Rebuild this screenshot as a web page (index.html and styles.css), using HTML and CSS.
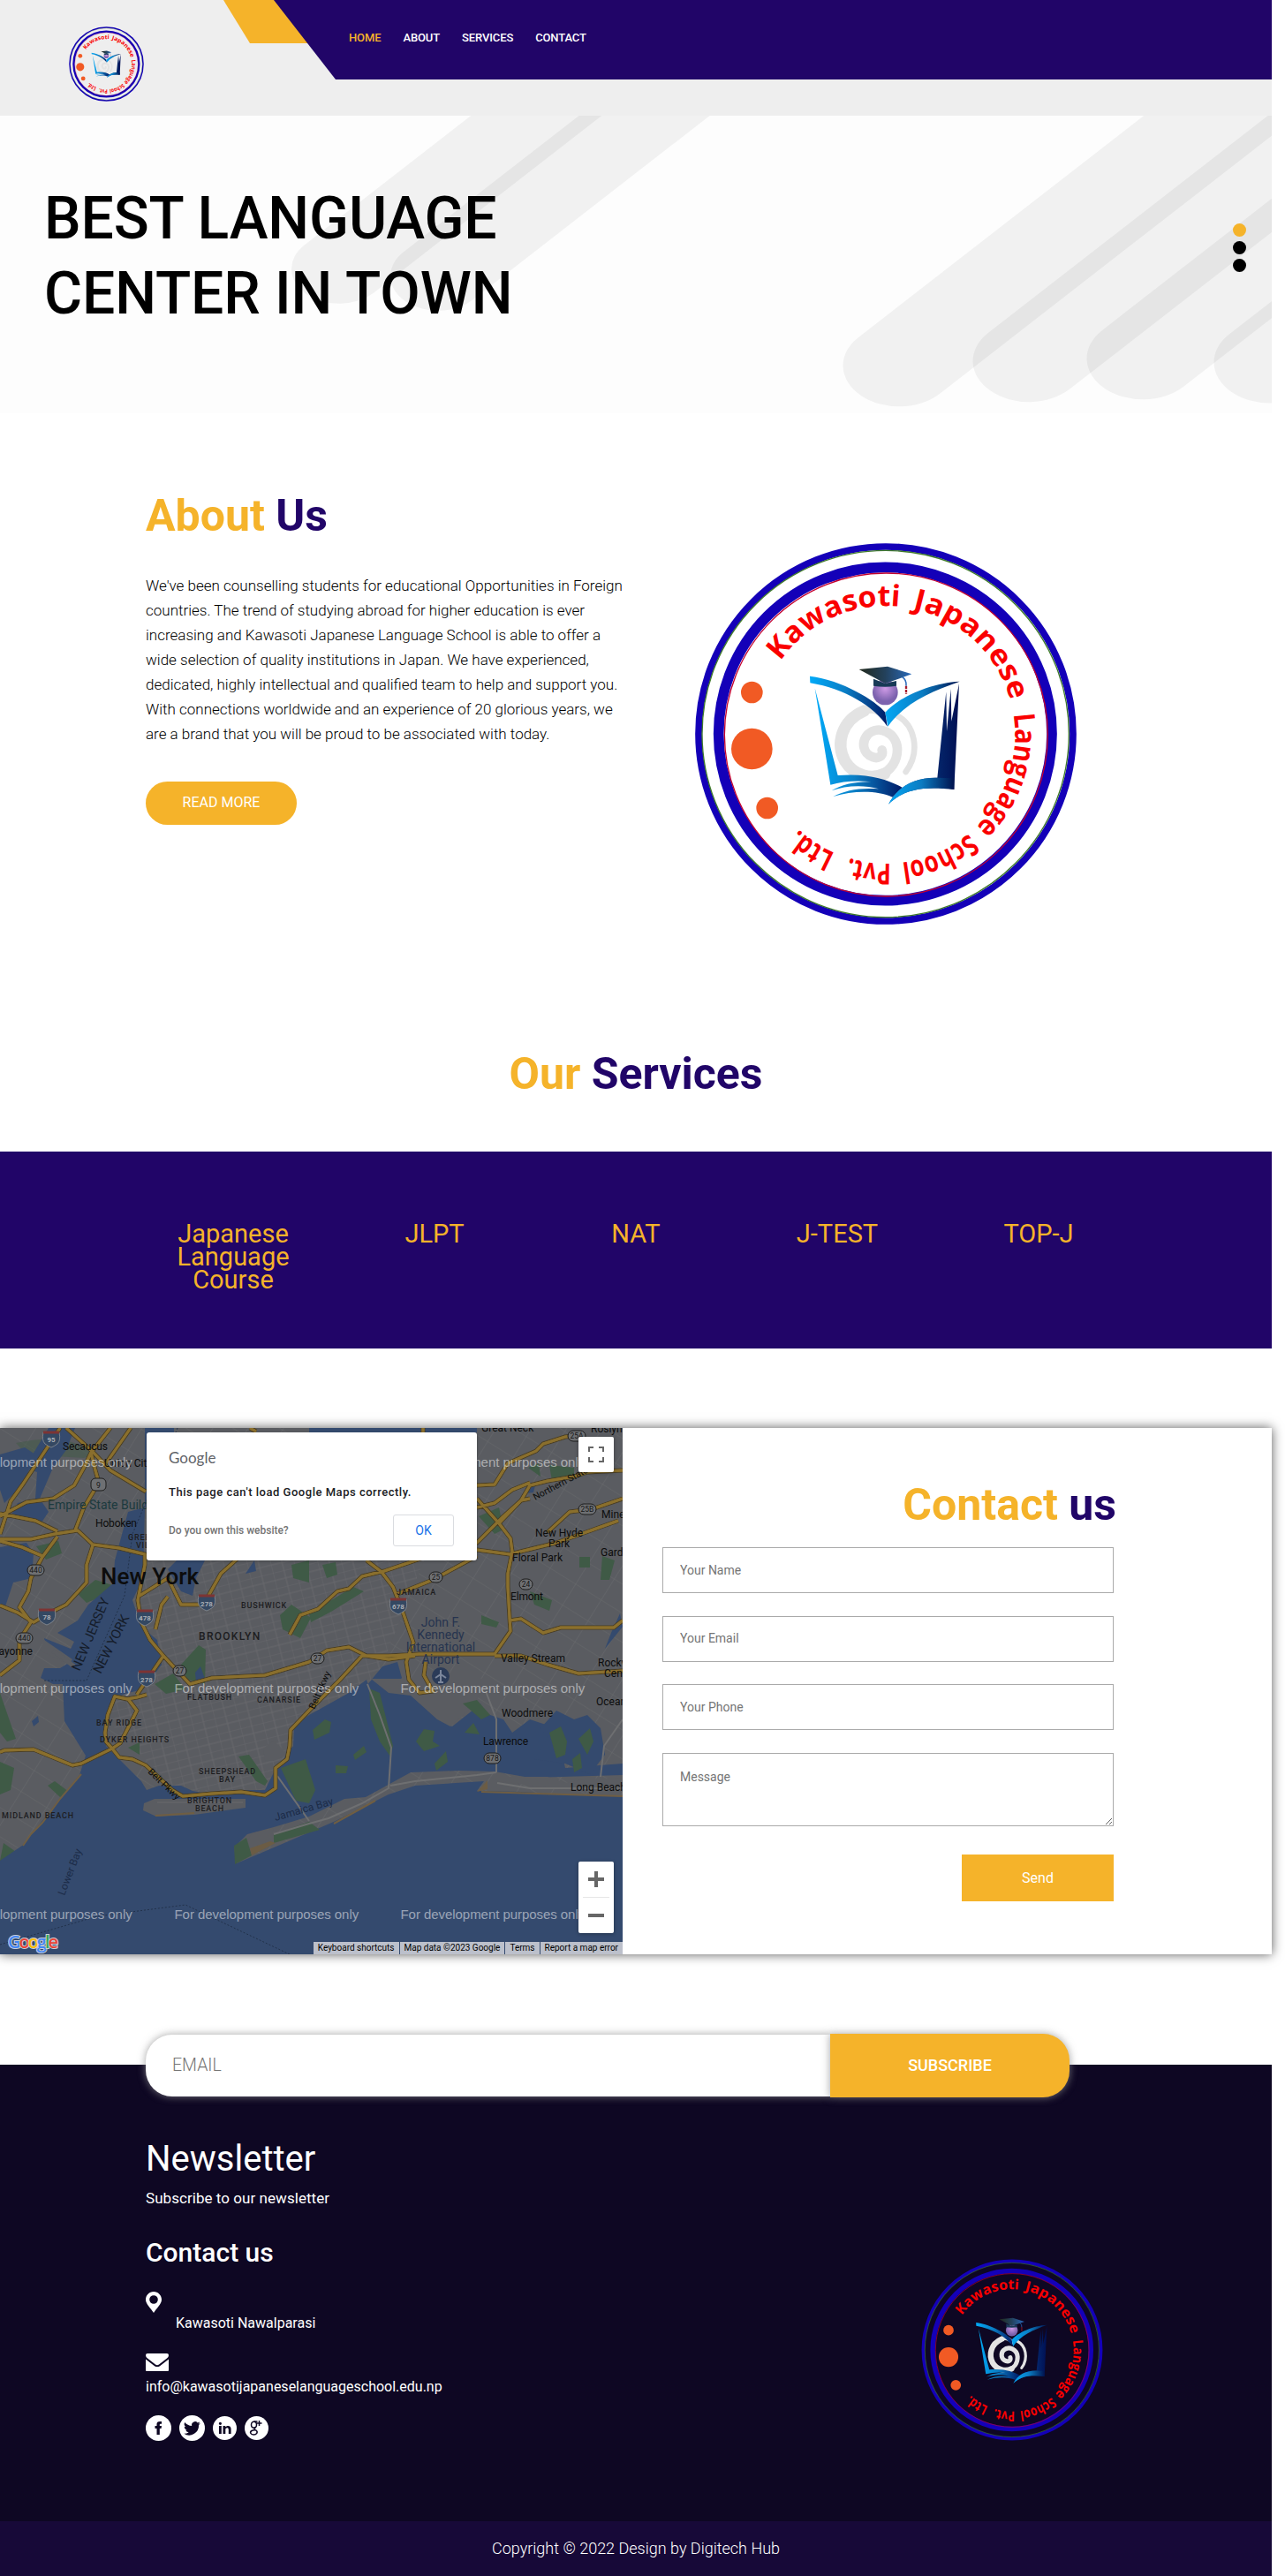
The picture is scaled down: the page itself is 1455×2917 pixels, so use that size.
FILE: index.html
```html
<!DOCTYPE html>
<html lang="en">
<head>
<meta charset="utf-8">
<title>Kawasoti Japanese Language School</title>
<link rel="stylesheet" href="styles.css">
</head>
<body>
<svg class="defs" width="0" height="0" aria-hidden="true">
  <defs>
    <linearGradient id="gLeft" x1="0" x2="1"><stop offset="0" stop-color="#00aaf8"/><stop offset=".45" stop-color="#0a7fc6"/><stop offset="1" stop-color="#001a66"/></linearGradient>
    <linearGradient id="gRight" x1="0" x2="1"><stop offset="0" stop-color="#04a7f4"/><stop offset=".5" stop-color="#0b7cc2"/><stop offset="1" stop-color="#00134f"/></linearGradient>
    <linearGradient id="gSide" x1="0" x2="1"><stop offset="0" stop-color="#0e5aa5"/><stop offset="1" stop-color="#000f52"/></linearGradient>
    <linearGradient id="gCap" x1="0" x2="1"><stop offset="0" stop-color="#222a1c"/><stop offset=".5" stop-color="#23415c"/><stop offset="1" stop-color="#2a6bbb"/></linearGradient>
    <radialGradient id="gHead" cy=".35"><stop offset="0" stop-color="#cf9be6"/><stop offset="1" stop-color="#7c62ae"/></radialGradient>
    <path id="ring" d="M292 726A438 438 0 0 1 1168 726A438 438 0 0 1 292 726"/>
    <symbol id="logo" viewBox="78 72 1302 1302">
      <circle cx="729" cy="723" r="636" fill="none" stroke="#1400b8" stroke-width="23"/>
      <circle cx="728" cy="723" r="623" fill="none" stroke="#3f7a2a" stroke-width="4"/>
      <circle cx="727" cy="723" r="566" fill="none" stroke="#1400b8" stroke-width="35"/>
      <circle cx="730" cy="726" r="549" fill="none" stroke="#c3002f" stroke-width="4"/>
      <g fill="#f15a24"><circle cx="274" cy="582" r="37"/><circle cx="274" cy="774" r="70"/><circle cx="326" cy="975" r="37"/></g>
      <g class="ring-text">
        <text><textPath href="#ring" startOffset="266" textLength="468" lengthAdjust="spacingAndGlyphs">Kawasoti</textPath></text>
        <text><textPath href="#ring" startOffset="778" textLength="480" lengthAdjust="spacingAndGlyphs">Japanese</textPath></text>
        <text><textPath href="#ring" startOffset="1305" textLength="420" lengthAdjust="spacingAndGlyphs">Language</textPath></text>
        <text><textPath href="#ring" startOffset="1758" textLength="252" lengthAdjust="spacingAndGlyphs">School</textPath></text>
        <text><textPath href="#ring" startOffset="2046" textLength="145" lengthAdjust="spacingAndGlyphs">Pvt.</textPath></text>
        <text><textPath href="#ring" startOffset="2240" textLength="150" lengthAdjust="spacingAndGlyphs">Ltd.</textPath></text>
      </g>
      <g fill="none" stroke="#e3e3e3" stroke-linecap="round">
        <path d="M655 645C575 680 560 760 590 815C620 865 680 880 725 858" stroke-width="40"/>
        <path d="M655 645C690 630 715 650 730 668" stroke-width="26"/>
        <path d="M716 778C722 800 702 808 685 802C650 790 645 750 668 725C705 690 765 720 768 772C770 815 745 850 705 866" stroke-width="32"/>
        <path d="M765 660C825 690 850 780 797 852" stroke-width="20"/>
      </g>
      <path d="M471 527C580 540 695 610 727 650L734 698C690 630 590 570 472 550Z" fill="url(#gLeft)"/>
      <path d="M727 650C770 600 880 550 980 545C880 580 790 620 736 698Z" fill="url(#gRight)"/>
      <path d="M488 568L566 864C670 855 740 880 785 905L752 938C700 915 620 915 550 936C590 915 640 905 705 910C650 895 590 900 545 916C580 895 620 885 680 886C630 880 580 885 541 896Z" fill="url(#gLeft)"/>
      <path d="M978 552L961 912C860 900 790 910 738 962C770 900 830 870 904 872L934 580L936 715L950 570L952 680Z" fill="url(#gSide)"/>
      <path d="M738 962C770 900 830 870 904 872L961 874L961 912C860 900 790 910 738 962Z" fill="url(#gRight)"/>
      <circle cx="727" cy="582" r="43" fill="url(#gHead)"/>
      <path d="M687 536L727 552L765 543V560Q727 566 687 560Z" fill="#173a56"/>
      <path d="M638 504L735 494L817 520L727 552Z" fill="url(#gCap)"/>
      <path d="M785 530Q800 540 798 560" fill="none" stroke="#2a6bbb" stroke-width="5"/>
      <path d="M798 560V588" stroke="#a81c2c" stroke-width="7" stroke-dasharray="10 3"/>
    </symbol>
  </defs>
</svg>

<div class="page">
  <header class="header">
    <svg class="header-logo"><use href="#logo"/></svg>
    <div class="nav-zone">
      <nav class="nav">
        <a class="active">HOME</a><a>ABOUT</a><a>SERVICES</a><a>CONTACT</a>
      </nav>
    </div>
  </header>

  <section class="hero">
    <svg class="hero-bg" viewBox="0 131 1440 337" preserveAspectRatio="none">
      <g fill="none" stroke="#000" stroke-linecap="round" transform="scale(1 .73)">
        <path d="M384 417L1384 -647" stroke-width="108" stroke-opacity=".048"/>
        <path d="M496 428L1496 -636" stroke-width="108" stroke-opacity=".048"/>
        <path d="M1018 567L2018 -497" stroke-width="127" stroke-opacity=".048"/>
        <path d="M1165 560L2165 -504" stroke-width="127" stroke-opacity=".048"/>
        <path d="M1294 556L2294 -508" stroke-width="127" stroke-opacity=".048"/>
        <path d="M1438 562L2438 -502" stroke-width="127" stroke-opacity=".048"/>
      </g>
    </svg>
    <h1>BEST LANGUAGE<br>CENTER IN TOWN</h1>
    <div class="dots"><i class="on"></i><i></i><i></i></div>
  </section>

  <section class="about">
    <div class="about-text">
      <h2><b>About</b> Us</h2>
      <p>We've been counselling students for educational Opportunities in Foreign countries. The trend of studying abroad for higher education is ever increasing and Kawasoti Japanese Language School is able to offer a wide selection of quality institutions in Japan. We have experienced, dedicated, highly intellectual and qualified team to help and support you. With connections worldwide and an experience of 20 glorious years, we are a brand that you will be proud to be associated with today.</p>
      <a class="more">READ MORE</a>
    </div>
    <svg class="about-logo"><use href="#logo"/></svg>
  </section>

  <h2 class="services-title"><b>Our</b> Services</h2>
  <section class="services">
    <div>Japanese<br>Language<br>Course</div><div>JLPT</div><div>NAT</div><div>J-TEST</div><div>TOP-J</div>
  </section>

  <section class="contact">
    <div class="map">
      <svg class="map-art" width="705" height="596" viewBox="0 0 705 596">
        <defs>
          <pattern id="streets" width="26" height="18" patternUnits="userSpaceOnUse" patternTransform="rotate(-14)"><path d="M0 0H26M0 9H26M0 0V18M13 0V18" stroke="#68696c" stroke-width=".9"/></pattern>
          <pattern id="streets2" width="34" height="28" patternUnits="userSpaceOnUse" patternTransform="rotate(32)"><path d="M0 0H34M0 0V28" stroke="#68696c" stroke-width="1.1"/></pattern>
          <g id="shield"><path d="M-9 -6H9Q11 3 7 7Q3 10 0 11Q-3 10 -7 7Q-11 3 -9 -6Z" fill="#344862" stroke="#8b8f96" stroke-width=".8"/><path d="M-9 -6H9" stroke="#7d3434" stroke-width="3"/></g>
        </defs>
        <rect width="705" height="596" fill="#5a5c61"/>
        <rect width="705" height="596" fill="url(#streets2)"/>
        <path d="M150 150H480L420 300L340 410H200L120 330Z" fill="#5a5c61"/>
        <path d="M150 150H480L420 300L340 410H200L120 330Z" fill="url(#streets)"/>
        <!-- parks -->
        <g fill="#3f5a46">
          <path d="M88 188L108 172L128 178L122 188L98 198Z"/><path d="M41 134L66 128L70 142L52 149Z"/><path d="M205 268L225 246L233 251L232 290L212 285Z"/><path d="M175 290L196 278L210 296L188 301Z"/><path d="M317 212L330 200L352 215L340 238L320 228Z"/><path d="M330 155L350 150L350 175L332 170Z"/><path d="M365 155L380 152L382 166L370 170Z"/><path d="M350 210L400 180L412 185L375 208L352 220Z"/><path d="M542 100L565 90L570 115L560 120Z"/><path d="M598 45L610 40L612 55Z"/><path d="M622 42L650 45L650 58L625 60Z"/><path d="M600 185L625 195L622 207L605 200Z"/><path d="M545 212L565 220L562 226L545 222Z"/><path d="M656 146H668V158H656Z"/><path d="M682 145L696 150L690 172H680Z"/><path d="M0 300L18 352L8 355L0 345Z"/><path d="M0 378L16 385L12 410L0 415Z"/><path d="M54 405L62 400L78 412L68 418Z"/><path d="M145 362L158 356L158 370Z"/><path d="M4 470L18 480L5 490H0Z"/><path d="M18 17Q80 4 105 30L95 34L30 30Z" opacity=".5"/>
        </g>
        <!-- water -->
        <g fill="#344a6e">
          <path d="M197 0H164V90L145 95L130 150L128 176L100 200L88 218L65 232L84 242L80 250L50 238L53 252L78 266L68 272L50 272L46 283L60 290H71L73 332L97 371L90 393L47 446L25 473L0 490V596H705V417L640 415L590 412L540 411L548 400L470 405L440 415L380 445L350 458L268 493L265 475L280 460L310 452L330 446L350 440L390 420L414 418L465 390L520 388L560 389L600 396L705 393V380L640 385L630 340L600 330L580 345L570 330L540 320L545 312L512 338L495 327L465 293L420 300L415 285L395 300L350 325L333 338L332 360L310 390L300 410L280 410L245 416L218 411L205 405L180 405L166 410L160 400L135 375L120 360L120 330L130 305L145 300L162 296L183 268L178 240L160 225L150 195L162 170L164 90H197Z"/>
          <path d="M0 30L28 22L40 30L30 55L20 70L5 85L0 70Z"/><path d="M55 0H85L75 25L60 45L45 80L55 95L45 110L30 102L12 100L20 85L40 80L42 50L28 45Z"/><path d="M0 135L30 130L38 142L36 170L15 175L5 205L0 200Z"/><path d="M190 160L200 150H232L222 170L218 190L205 185L196 170Z"/><path d="M350 0H540V5H350Z"/><path d="M433 270L450 265L455 283L430 310L415 292Z"/><path d="M702 210L705 225L685 250L692 232Z"/><path d="M600 68L606 65L604 73L597 74Z"/>
          <path d="M278 165L288 150L290 162Z"/><path d="M221 277L227 270L232 284L222 288Z"/><path d="M36 332L43 326L44 333L38 338Z"/>
          <path d="M605 375L620 350L612 340L630 320L650 330L665 325L680 340L685 370L668 392L640 380Z"/>
        </g>
        <!-- land over the water -->
        <g fill="#5a5c61">
          <path d="M163 425L175 420L278 420V430L220 438L177 440L162 433Z"/>
          <path d="M178 424H275" stroke="#68696c"/>
          <path d="M50 240L82 262L78 268L45 252Z"/><path d="M60 252L84 270" stroke="#5a5c61" stroke-width="5"/>
          <path d="M465 303L495 330L510 338L530 320L545 300V284H420L440 300Z"/>
          <path d="M640 402L660 398L705 396V412L640 410L565 400L555 395H620Z"/>
          <path d="M298 363L310 354L321 365V372L310 377L300 376Z"/>
          <path d="M278 472L285 459L309 453L310 472L283 484Z"/>
        </g>
        <g fill="#3f5a46">
          <path d="M265 473L279 464L285 484L266 494Z"/><path d="M310 460L350 446L362 455L310 470Z"/>
          <path d="M318 385L346 375L357 410L350 425L335 422Z"/><path d="M270 372L282 370L303 400L300 405L290 400Z"/>
          <path d="M418 295L430 300L445 360L442 372L430 355L420 330Z"/>
          <path d="M471 355L480 341L492 343L490 355L498 360L480 366Z"/><path d="M492 380L505 366L507 378L494 388Z"/><path d="M354 342L368 330L375 333L373 345L356 353Z"/><path d="M400 370L412 360L415 367L402 376Z"/><path d="M380 382L394 383L392 391H380Z"/>
          <path d="M622 345L635 338L642 355L640 370L630 374Z"/><path d="M655 352L668 340L672 355L665 370Z"/><path d="M648 375L657 368L659 385L650 390Z"/>
          <path d="M526 345L536 334L543 347Z"/><path d="M524 312L540 308L555 325L545 330Z"/>
        </g>
        <g fill="none" stroke="#6f5e43" stroke-width="2"><path d="M176 439L220 436M378 448L425 422M545 412L640 415L705 417M92 392L68 420L48 447L35 460L26 473"/></g>
        <path d="M283 476L306 468L312 470L285 484Z" fill="#6b5c45"/>
        <path d="M540 412L552 399V409Z" fill="#6b5c45"/>
        <!-- minor links -->
        <g fill="none" stroke="#6e6f71" stroke-width="2"><path d="M416 290L430 325L443 362L440 408L410 425L372 442L350 448L310 460M442 405L470 400L540 393L562 390M562 390V330L550 298M563 402L600 408H705M314 394L350 445M680 395L684 360L705 330"/></g>
        <path d="M201 0L150 120L141 190L105 270L98 286H50M0 585L110 553L210 540L330 597" fill="none" stroke="#22324b" stroke-dasharray="2 2"/>
        <!-- highways -->
        <g fill="none" stroke="#4a3e23" stroke-width="5" stroke-linejoin="round">
          <path id="roads" d="M68 0L55 20L25 65L12 83L0 120M0 100L30 84L60 80L84 65L95 45L103 28L125 0M75 0L105 27L125 48L165 72M103 28L108 48L112 62L95 90L85 116M148 0L120 40M0 126H35L62 120L88 116L105 132L135 136L164 143V155L158 185L156 195L160 220L170 240L185 258L155 302M105 133L98 155V175L75 200L55 210L38 220L20 209L0 201M65 123L48 146L35 170L32 185L22 203L35 220L22 240V263L0 280M0 128L25 135L48 145M0 97L40 105L65 117M158 190L190 170L205 200L230 200L236 190L250 165L270 147M185 258L215 290L240 283L300 280L350 265M190 191L183 200L176 228M328 234L340 212L360 205L382 185L395 182L410 168L435 162L500 140L540 130L570 100L590 82L600 65L620 60L650 55L665 50L705 48M166 302L155 305L144 307L130 304L122 325L119 345L120 355L127 363L136 357L150 330L155 320L145 307M127 363L92 380L82 382L60 373L38 364L5 365L0 367M127 363L135 373L150 375L165 382L195 410L207 417L240 414L273 412L300 416L312 408L312 385L325 375L328 360L329 342L350 320L385 285L410 258L440 258L475 256H560L578 230L577 215L575 180L575 165L580 140L578 125L565 108L540 80M540 138L555 140L577 143L630 130L700 105M540 65L560 64L575 40L607 26L615 18L640 10L660 8M540 90L560 85L580 70L600 62M565 108L590 82L600 80M577 218L590 216L615 232L635 226L695 226L705 218M415 150L432 163L445 180L455 205L468 243L460 265L463 285L475 300L490 298L480 280L482 265M350 265L370 252L395 248L415 258L440 262L470 258M560 258H590L620 268L655 278L705 275M479 0V8M283 0L290 4M450 188L490 172L540 145M620 118L645 95L670 92L705 80"/>
        </g>
        <use href="#roads" fill="none" stroke="#8a6f2d" stroke-width="3"/>
        <path class="road-top" d="M68 0L55 20L25 65L12 83L0 120M0 100L30 84L60 80L84 65L95 45L103 28L125 0M75 0L105 27L125 48L165 72M103 28L108 48L112 62L95 90L85 116M148 0L120 40M0 126H35L62 120L88 116L105 132L135 136L164 143V155L158 185L156 195L160 220L170 240L185 258L155 302M105 133L98 155V175L75 200L55 210L38 220L20 209L0 201M65 123L48 146L35 170L32 185L22 203L35 220L22 240V263L0 280M0 128L25 135L48 145M0 97L40 105L65 117M158 190L190 170L205 200L230 200L236 190L250 165L270 147M185 258L215 290L240 283L300 280L350 265M190 191L183 200L176 228M328 234L340 212L360 205L382 185L395 182L410 168L435 162L500 140L540 130L570 100L590 82L600 65L620 60L650 55L665 50L705 48M166 302L155 305L144 307L130 304L122 325L119 345L120 355L127 363L136 357L150 330L155 320L145 307M127 363L92 380L82 382L60 373L38 364L5 365L0 367M127 363L135 373L150 375L165 382L195 410L207 417L240 414L273 412L300 416L312 408L312 385L325 375L328 360L329 342L350 320L385 285L410 258L440 258L475 256H560L578 230L577 215L575 180L575 165L580 140L578 125L565 108L540 80M540 138L555 140L577 143L630 130L700 105M540 65L560 64L575 40L607 26L615 18L640 10L660 8M540 90L560 85L580 70L600 62M565 108L590 82L600 80M577 218L590 216L615 232L635 226L695 226L705 218M415 150L432 163L445 180L455 205L468 243L460 265L463 285L475 300L490 298L480 280L482 265M350 265L370 252L395 248L415 258L440 262L470 258M560 258H590L620 268L655 278L705 275M479 0V8M283 0L290 4M450 188L490 172L540 145M620 118L645 95L670 92L705 80"/>
        <!-- route markers -->
        <g class="shields">
          <use href="#shield" x="58" y="11"/><text x="58" y="16">95</text>
          <use href="#shield" x="53" y="212"/><text x="53" y="217">78</text>
          <use href="#shield" x="164" y="213"/><text x="164" y="218">478</text>
          <use href="#shield" x="234" y="196"/><text x="234" y="202">278</text>
          <use href="#shield" x="166" y="282"/><text x="166" y="288">278</text>
          <use href="#shield" x="451" y="200"/><text x="451" y="205">678</text>
        </g>
        <g class="rounds">
          <rect x="103" y="57" width="17" height="14" rx="5"/><text x="111.500" y="68">9</text>
          <rect x="31" y="155" width="19" height="12" rx="6"/><text x="40.500" y="164">440</text>
          <rect x="18" y="232" width="19" height="12" rx="6"/><text x="27.500" y="241">440</text>
          <rect x="196" y="269" width="15" height="12" rx="6"/><text x="203.500" y="278">27</text>
          <rect x="352" y="255" width="15" height="12" rx="6"/><text x="359.500" y="264">27</text>
          <rect x="486" y="163" width="15" height="12" rx="6"/><text x="493.500" y="172">25</text>
          <rect x="643" y="3" width="20" height="12" rx="6"/><text x="653" y="12">25A</text>
          <rect x="655" y="86" width="20" height="12" rx="6"/><text x="665" y="95">25B</text>
          <rect x="588" y="171" width="15" height="12" rx="6"/><text x="595.500" y="180">24</text>
          <rect x="548" y="368" width="19" height="12" rx="6"/><text x="557.500" y="377">878</text>
        </g>
        <!-- place names -->
        <g class="places">
          <text x="71" y="25" textLength="51">Secaucus</text><text x="118" y="44">Union City</text>
          <text x="108" y="112" textLength="47">Hoboken</text><text x="-9" y="257">Bayonne</text>
          <text x="545" y="4">Great Neck</text><text x="669" y="5">Roslyn</text>
          <text x="681" y="102">Mineola</text><text x="606" y="123" textLength="54">New Hyde</text><text x="621" y="135">Park</text>
          <text x="580" y="151" textLength="57">Floral Park</text><text x="680" y="145">Garden</text><text x="578" y="195" textLength="37">Elmont</text>
          <text x="567" y="265" textLength="73">Valley Stream</text><text x="677" y="270">Rockville</text><text x="684" y="282">Centre</text>
          <text x="675" y="314">Oceanside</text><text x="568" y="327" textLength="58">Woodmere</text><text x="547" y="359" textLength="51">Lawrence</text><text x="646" y="411">Long Beach</text>
          <text class="city" x="114" y="177" textLength="111">New York</text>
          <text class="teal" x="54" y="92">Empire State Building</text>
          <g class="airport"><text x="499" y="225">John F.</text><text x="499" y="239">Kennedy</text><text x="499" y="253">International</text><text x="499" y="267">Airport</text></g>
          <g class="state"><text transform="translate(90 276) rotate(-67)" textLength="88">NEW JERSEY</text><text transform="translate(114 279) rotate(-63)" textLength="72">NEW YORK</text></g>
          <text class="parkway" transform="translate(167 390) rotate(44)">Belt Pkwy</text><text class="parkway" transform="translate(356 319) rotate(-66)">Belt Pkwy</text>
          <text class="parkway" transform="translate(606 82) rotate(-28)">Northern State</text>
          <text class="sea" transform="translate(73 530) rotate(-69)">Lower Bay</text><text class="sea" transform="translate(312 445) rotate(-16)">Jamaica Bay</text>
        </g>
        <g class="areas">
          <text class="big" x="225" y="240" textLength="70">BROOKLYN</text><text x="273" y="204" textLength="52">BUSHWICK</text><text x="449" y="189" textLength="45">JAMAICA</text>
          <text x="145" y="127">GREENWICH</text><text x="154" y="136">VILLAGE</text>
          <text x="212" y="308" textLength="51">FLATBUSH</text><text x="291" y="311" textLength="50">CANARSIE</text><text x="109" y="337" textLength="52">BAY RIDGE</text><text x="113" y="356" textLength="79">DYKER HEIGHTS</text>
          <text x="225" y="392" textLength="65">SHEEPSHEAD</text><text x="248" y="401">BAY</text><text x="212" y="425" textLength="51">BRIGHTON</text><text x="221" y="434">BEACH</text><text x="2" y="442" textLength="82">MIDLAND BEACH</text>
        </g>
        <circle cx="499" cy="281" r="10" fill="#2b3b58"/><path d="M499 274V288M493 283L499 279L505 283M496 288H502" stroke="#7b869b" stroke-width="2" fill="none"/>
        <g class="watermark">
          <text x="-59" y="44" textLength="208.700">For development purposes only</text><text x="453.500" y="44" textLength="208.700">For development purposes only</text>
          <text x="-59" y="300" textLength="208.700">For development purposes only</text><text x="197.500" y="300" textLength="208.700">For development purposes only</text><text x="453.500" y="300" textLength="208.700">For development purposes only</text>
          <text x="-59" y="556" textLength="208.700">For development purposes only</text><text x="197.500" y="556" textLength="208.700">For development purposes only</text><text x="453.500" y="556" textLength="208.700">For development purposes only</text>
        </g>
        <text class="gbrand" x="9" y="589" textLength="57"><tspan fill="#4285f4">G</tspan><tspan fill="#ea4335">o</tspan><tspan fill="#fbbc05">o</tspan><tspan fill="#4285f4">g</tspan><tspan fill="#34a853">l</tspan><tspan fill="#ea4335">e</tspan></text>
      </svg>
      <div class="dialog">
        <div class="g-word">Google</div>
        <div class="g-title">This page can't load Google Maps correctly.</div>
        <div class="g-row"><span>Do you own this website?</span><button>OK</button></div>
      </div>
      <div class="fs"><svg width="18" height="18"><path d="M0 0H6V2H2V6H0ZM12 0H18V6H16V2H12ZM0 12H2V16H6V18H0ZM16 12H18V18H12V16H16Z" fill="#666"/></svg></div>
      <div class="zoom">
        <svg width="18" height="18"><path d="M7 0H11V7H18V11H11V18H7V11H0V7H7Z" fill="#666"/></svg>
        <hr>
        <svg width="18" height="18"><path d="M0 7H18V11H0Z" fill="#666"/></svg>
      </div>
      <div class="attrib"><span>Keyboard shortcuts</span><span>Map data ©2023 Google</span><span>Terms</span><span>Report a map error</span></div>
    </div>
    <form class="form">
      <h2><b>Contact</b> us</h2>
      <input placeholder="Your Name"><input placeholder="Your Email"><input placeholder="Your Phone">
      <textarea placeholder="Message"></textarea>
      <button type="button">Send</button>
    </form>
  </section>

  <footer class="footer">
    <form class="subscribe"><input placeholder="EMAIL"><button type="button">SUBSCRIBE</button></form>
    <div class="foot-row">
      <div>
        <h3>Newsletter</h3>
        <p class="sub">Subscribe to our newsletter</p>
        <h4>Contact us</h4>
        <svg class="pin" width="18" height="24" viewBox="0 0 18 24"><path fill-rule="evenodd" d="M9 0C14 0 18 4 18 9C18 14 12 19 9 24C6 19 0 14 0 9C0 4 4 0 9 0ZM9 4.200A4.800 4.800 0 1 0 9 13.800A4.800 4.800 0 1 0 9 4.200Z" fill="#fff"/></svg>
        <p class="addr">Kawasoti Nawalparasi</p>
        <svg class="mail" width="26" height="20" viewBox="0 0 26 20"><path d="M2 0H24Q26 0 26 2Q26 4 24 5.500L15 12.500Q13 14 11 12.500L2 5.500Q0 4 0 2Q0 0 2 0ZM0 6.500L10 14.200Q13 16 16 14.200L26 6.500V19Q26 20 25 20H1Q0 20 0 19Z" fill="#fff"/></svg>
        <p class="email">info@kawasotijapaneselanguageschool.edu.np</p>
        <div class="social">
          <svg width="29" height="29" viewBox="0 0 29 29"><circle cx="14.500" cy="14.500" r="14.500" fill="#fff"/><path d="M12.500 22V15H10.500V12H12.500V10C12.500 7.500 14 6.500 18 7V9.800C16.500 9.600 15.800 9.800 15.800 10.800V12H18L17.600 15H15.800V22Z" fill="#0e0723"/></svg>
          <svg width="29" height="29" viewBox="0 0 29 29"><circle cx="14.500" cy="14.500" r="14.500" fill="#fff"/><path transform="translate(5.300 5.200) scale(.78)" d="M23.600 4.900a10 10 0 0 1-2.800.8 4.900 4.900 0 0 0 2.100-2.700c-1 .6-2 1-3.100 1.200a4.900 4.900 0 0 0-8.400 4.500A14 14 0 0 1 1.300 3.600a4.900 4.900 0 0 0 1.500 6.600c-.8 0-1.600-.2-2.200-.6a4.900 4.900 0 0 0 3.900 4.900c-.7.200-1.500.2-2.200.1a4.900 4.900 0 0 0 4.600 3.400A9.900 9.900 0 0 1 0 20a14 14 0 0 0 21.500-12.500c1-.7 1.700-1.600 2.100-2.600Z" fill="#0e0723"/></svg>
          <svg width="27" height="27" viewBox="0 0 27 27"><circle cx="13.500" cy="13.500" r="13.500" fill="#fff"/><path d="M7 11H9.800V20H7ZM8.400 6.700A1.600 1.600 0 1 1 8.400 9.900A1.600 1.600 0 1 1 8.400 6.700ZM11.500 11H14.200V12.300C15.500 10.300 20.600 9.900 20.600 14.500V20H17.800V15.200C17.800 12.500 14.300 12.700 14.300 15.200V20H11.500Z" fill="#0e0723"/></svg>
          <svg width="27" height="27" viewBox="0 0 27 27"><circle cx="13.500" cy="13.500" r="13.500" fill="#fff"/><g fill="none" stroke="#0e0723" stroke-width="1.500"><ellipse cx="10.500" cy="9.700" rx="3" ry="3.400"/><path d="M14.500 6H10.500M12.500 12.500C9.500 14 11 15 13 16.200C15.500 18 13.500 21 10.200 21C6.500 21 5.500 18 8 16.500C9.500 15.600 11 15.800 12.500 15.800M16.500 5V11M13.800 8H19.500"/></g></svg>
        </div>
      </div>
      <svg class="foot-logo"><use href="#logo"/></svg>
    </div>
    <div class="copy">Copyright © 2022 Design by Digitech Hub</div>
  </footer>
</div>
</body>
</html>
```
FILE: styles.css
```css
* { box-sizing: border-box; }
body { margin: 0; background: #fff; font-family: Roboto, "Liberation Sans", sans-serif; color: #000; }
.defs { position: absolute; }
.page { width: 1440px; }
h1, h2, h3, h4, p { margin: 0; }
input, textarea, button { font-family: inherit; outline: 0; }
::placeholder { color: #757575; opacity: 1; }
.ring-text { font: 700 99px "Open Sans", Lato, sans-serif; fill: #fa0000; }

.header { display: flex; justify-content: space-between; height: 131px; background: #eee; }
.header-logo { width: 85px; height: 85px; margin: 30px 0 0 78px; }
.nav-zone { position: relative; width: 1187px; height: 90px; padding-left: 57px; }
.nav-zone::before { content: ""; position: absolute; left: 0; top: 0; width: 130px; height: 49px; background: #f5b32a; clip-path: polygon(0 0, 100% 0, 100% 100%, 30px 100%); }
.nav { position: relative; display: flex; gap: 25px; height: 90px; padding: 34px 0 0 85px; background: #210568; clip-path: polygon(0 0, 100% 0, 100% 100%, 70px 100%); }
.nav a { font-size: 13px; font-weight: 500; line-height: 17px; letter-spacing: -.12px; color: #fff; }
.nav .active { color: #f5b32a; }

.hero { position: relative; display: flex; justify-content: space-between; height: 337px; background: #fdfdfd; overflow: hidden; }
.hero-bg { position: absolute; inset: 0; width: 1440px; height: 337px; }
.hero h1 { position: relative; padding: 73.500px 0 0 50px; font-size: 66px; font-weight: 500; line-height: 85px; letter-spacing: -.1px; }
.dots { position: relative; display: flex; flex-direction: column; gap: 5px; padding: 122px 29px 0 0; }
.dots i { width: 15px; height: 15px; border-radius: 50%; background: #000; }
.dots .on { background: #f5b32a; }

h2 { font-size: 50px; font-weight: 700; line-height: 60px; color: #210568; }
h2 b { font-weight: inherit; color: #f5b32a; }
.about { display: flex; justify-content: space-between; padding: 86px 220px 0 165px; }
.about-text { width: 545px; }
.about p { margin-top: 35px; font-size: 17px; font-weight: 300; line-height: 28px; }
.more { display: block; width: 171px; height: 49px; margin-top: 40px; border-radius: 25px; background: #f5b32a; color: #fff; font-size: 16px; line-height: 47px; text-align: center; }
.about-logo { width: 434px; height: 434px; margin-top: 60px; }

.services-title { margin: 138px 0 58px; text-align: center; }
.services { display: grid; grid-template-columns: repeat(5, 228px); justify-content: center; height: 223px; padding-top: 80px; background: #210568; color: #f5b32a; font-size: 29px; line-height: 26px; text-align: center; }

.contact { display: flex; height: 596px; margin-top: 90px; background: #fff; box-shadow: 0 0 12px rgba(0, 0, 0, .65); }
.map { position: relative; width: 705px; height: 596px; overflow: hidden; }
.map-art { display: block; font-family: Roboto, sans-serif; }
.road-top { fill: none; stroke: #8a6f2d; stroke-width: 3px; stroke-linejoin: round; }
.places { font-size: 12px; fill: #0c0c0c; }
.city { font-size: 26px; font-weight: 500; }
.teal { font-size: 14px; fill: #1c3a3e; }
.airport { font-size: 14px; fill: #27344f; text-anchor: middle; }
.state { font-size: 15px; fill: #151c29; }
.parkway { font-size: 10.500px; }
.sea { font-size: 12px; fill: #1c2c48; }
.areas { font-size: 9px; font-weight: 500; fill: #1d1d1f; letter-spacing: .8px; }
.areas .big { font-size: 12px; }
.shields { font-size: 8px; font-weight: 700; fill: #aaaeb5; text-anchor: middle; }
.rounds rect { fill: #6e7073; stroke: #1c1c1c; }
.rounds text { font-size: 8.500px; fill: #161616; text-anchor: middle; }
.watermark { font: 15px "Liberation Sans", Arial, sans-serif; fill: rgba(255, 255, 255, .5); }
.gbrand { font: 600 20px "Open Sans", sans-serif; stroke: #c9ced8; stroke-width: 2px; paint-order: stroke; }
.dialog { position: absolute; left: 166px; top: 5px; width: 374px; height: 145px; padding: 19px 26px 0 25px; border-radius: 3px; background: #fff; box-shadow: 0 1px 3px rgba(0, 0, 0, .3); }
.g-word { font: 17px/20px Lato, sans-serif; color: #5f6368; }
.g-title { margin-top: 19px; font-size: 13px; font-weight: 500; line-height: 20px; letter-spacing: .52px; color: #202124; white-space: nowrap; }
.g-row { display: flex; justify-content: space-between; align-items: center; margin-top: 15px; font-size: 12px; font-weight: 500; color: #757575; }
.g-row button { width: 69px; height: 36px; border: 1px solid #dadce0; border-radius: 3px; background: #fff; color: #1a73e8; font-size: 14px; padding: 0; }
.fs, .zoom { position: absolute; left: 655px; width: 40px; background: #fff; border-radius: 2px; box-shadow: 0 1px 4px rgba(0, 0, 0, .3); }
.fs { top: 10px; height: 40px; padding: 11px; }
.fs svg, .zoom svg { display: block; }
.zoom { top: 491px; height: 81px; padding: 11px; }
.zoom hr { width: 30px; height: 1px; margin: 11px -6px; border: 0; background: #e6e6e6; }
.attrib { position: absolute; right: 0; bottom: 0; display: flex; gap: 1px; height: 14px; font-size: 10px; line-height: 14px; color: #000; white-space: nowrap; }
.attrib span { padding: 0 5px; background: #bcc0cb; }

.form { display: flex; flex-direction: column; width: 735px; padding: 57px 179px 0 45px; }
.form h2 { width: 514px; text-align: right; margin-bottom: 18px; }
.form input { width: 511px; height: 52px; margin: 0 0 25.500px; padding: 0 19px 1px; border: 1px solid #aaa; font-size: 14px; }
.form textarea { width: 511px; height: 83px; padding: 18px 19px; border: 1px solid #aaa; font-size: 14px; line-height: 17px; }
.form button { align-self: flex-end; width: 172px; height: 53px; margin-top: 32.500px; padding-bottom: 2px; border: 0; background: #f5b32a; color: #fff; font-size: 16px; }

.footer { margin-top: 125px; height: 579px; background: #0e0723; color: #fff; display: flex; flex-direction: column; }
.subscribe { display: flex; align-items: center; width: 1046px; height: 72px; margin: -35px 0 0 165px; }
.subscribe input { width: 775px; height: 70px; padding: 0 30px 2px; border: 0; border-radius: 30px 0 0 30px; font-size: 19.500px; font-weight: 300; box-shadow: 0 0 10px rgba(140, 140, 140, .8); }
.subscribe button { width: 271px; height: 72px; padding: 0 0 2px; border: 0; border-radius: 0 30px 30px 0; background: #f5b32a; color: #fff; font-size: 18px; font-weight: 500; box-shadow: 0 0 10px rgba(140, 140, 140, .8); }
.foot-row { display: flex; justify-content: space-between; height: 480px; padding: 46px 191px 0 165px; }
.foot-row h3 { font-size: 40px; font-weight: 400; line-height: 48px; }
.sub { margin-top: 8px; font-size: 17px; line-height: 24px; letter-spacing: .05px; }
.foot-row h4 { margin-top: 32px; font-size: 30px; font-weight: 500; line-height: 36px; }
.pin { display: block; margin-top: 26px; }
.addr, .email { font-size: 16px; line-height: 20px; }
.addr { margin: 2px 0 0 34px; }
.mail { display: block; margin: 24px 0 8px; }
.social { display: flex; align-items: center; gap: 9px; margin-top: 22px; }
.foot-logo { width: 206px; height: 206px; margin-top: 137px; }
.copy { height: 62px; background: #170938; font-size: 18px; font-weight: 300; line-height: 62px; text-align: center; }
```
